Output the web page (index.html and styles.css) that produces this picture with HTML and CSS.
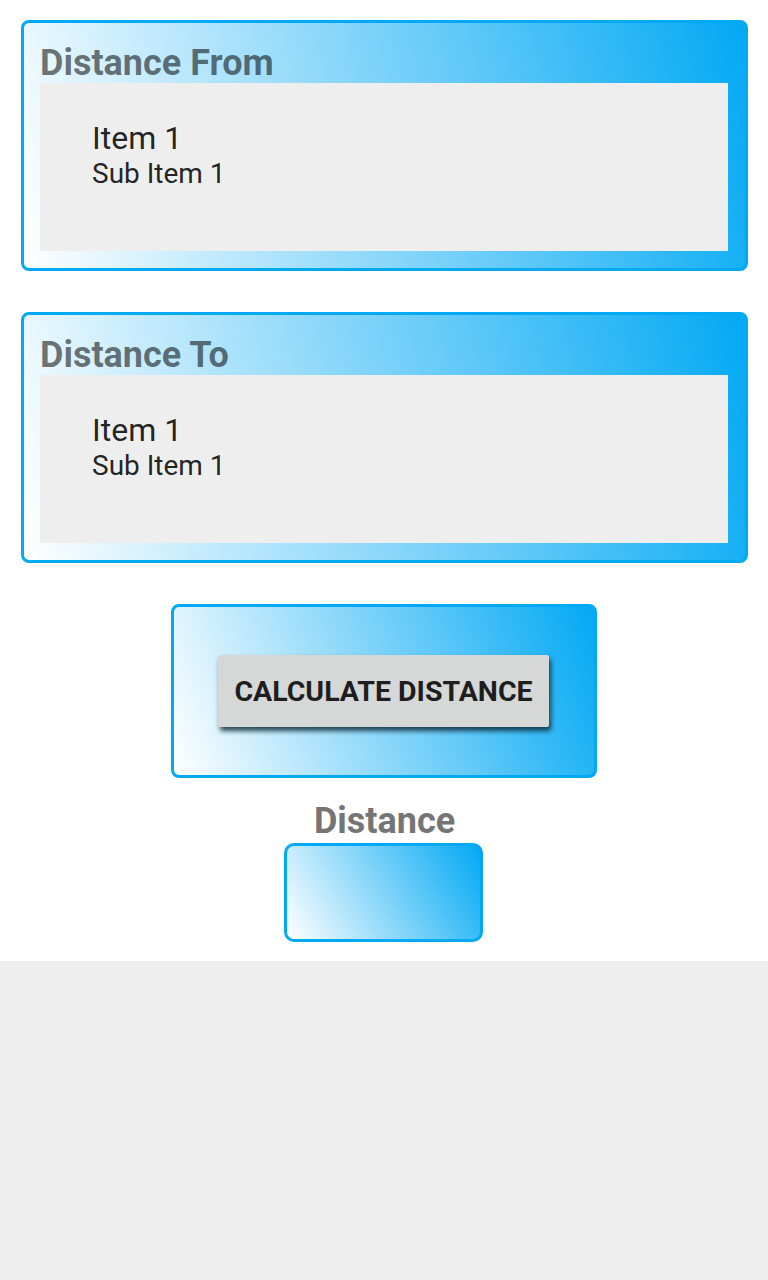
FILE: index.html
```html
<!DOCTYPE html>
<html>
<head>
<meta charset="utf-8">
<link rel="stylesheet" href="styles.css">
</head>
<body>
<div class="screen">
  <section class="card">
    <h2 class="card-title">Distance From</h2>
    <div class="panel">
      <div class="item">Item 1</div>
      <div class="sub-item">Sub Item 1</div>
    </div>
  </section>
  <section class="card">
    <h2 class="card-title">Distance To</h2>
    <div class="panel">
      <div class="item">Item 1</div>
      <div class="sub-item">Sub Item 1</div>
    </div>
  </section>
  <div class="action-box">
    <button class="calc-btn">CALCULATE DISTANCE</button>
  </div>
  <div class="result-label">Distance</div>
  <div class="result-box"></div>
</div>
</body>
</html>
```
FILE: styles.css
```css
* { box-sizing: border-box; }
html, body { margin: 0; padding: 0; }
body {
  background: #eeeeee;
  font-family: Roboto, "Noto Sans", sans-serif;
}
.screen {
  background: #ffffff;
  height: 961px;
  padding: 20px 20px 0 21px;
  display: flex;
  flex-direction: column;
  align-items: stretch;
}
.card {
  height: 251px;
  border: 3px solid #03a9f4;
  border-radius: 8px;
  background: linear-gradient(75deg, #ffffff 0%, #03a9f4 100%);
  padding: 21px 17px 17px 16px;
  display: flex;
  flex-direction: column;
}
.card + .card { margin-top: 41px; }
.card-title {
  margin: 0;
  font-size: 36px;
  line-height: 39px;
  font-weight: 700;
  color: rgba(0, 0, 0, 0.55);
}
.panel {
  flex: 1;
  background: #eeeeee;
  padding: 37px 0 0 52px;
  color: rgba(0, 0, 0, 0.87);
}
.item {
  font-size: 32px;
  line-height: 36px;
}
.sub-item {
  font-size: 28px;
  line-height: 35px;
}
.action-box {
  align-self: center;
  margin-top: 41px;
  margin-left: -2px;
  width: 426px;
  height: 174px;
  border: 3px solid #03a9f4;
  border-radius: 8px;
  background: linear-gradient(70deg, #ffffff 0%, #03a9f4 100%);
  display: flex;
  align-items: center;
  justify-content: center;
}
.calc-btn {
  width: 331px;
  height: 72px;
  border: none;
  border-radius: 2px;
  background: #d6d8d8;
  box-shadow: 2px 4px 5px rgba(10, 40, 55, 0.85);
  font-family: Roboto, "Noto Sans", sans-serif;
  font-size: 28.5px;
  font-weight: 700;
  color: #1e1e1e;
  padding: 0;
  margin-left: 0;
}
.result-label {
  align-self: center;
  margin-top: 24px;
  font-size: 36px;
  line-height: 38px;
  font-weight: 700;
  color: #757575;
}
.result-box {
  align-self: center;
  margin-top: 3px;
  margin-left: -2px;
  width: 199px;
  height: 99px;
  border: 3px solid #03a9f4;
  border-radius: 10px;
  background: linear-gradient(60deg, #ffffff 0%, #03a9f4 100%);
}
```
